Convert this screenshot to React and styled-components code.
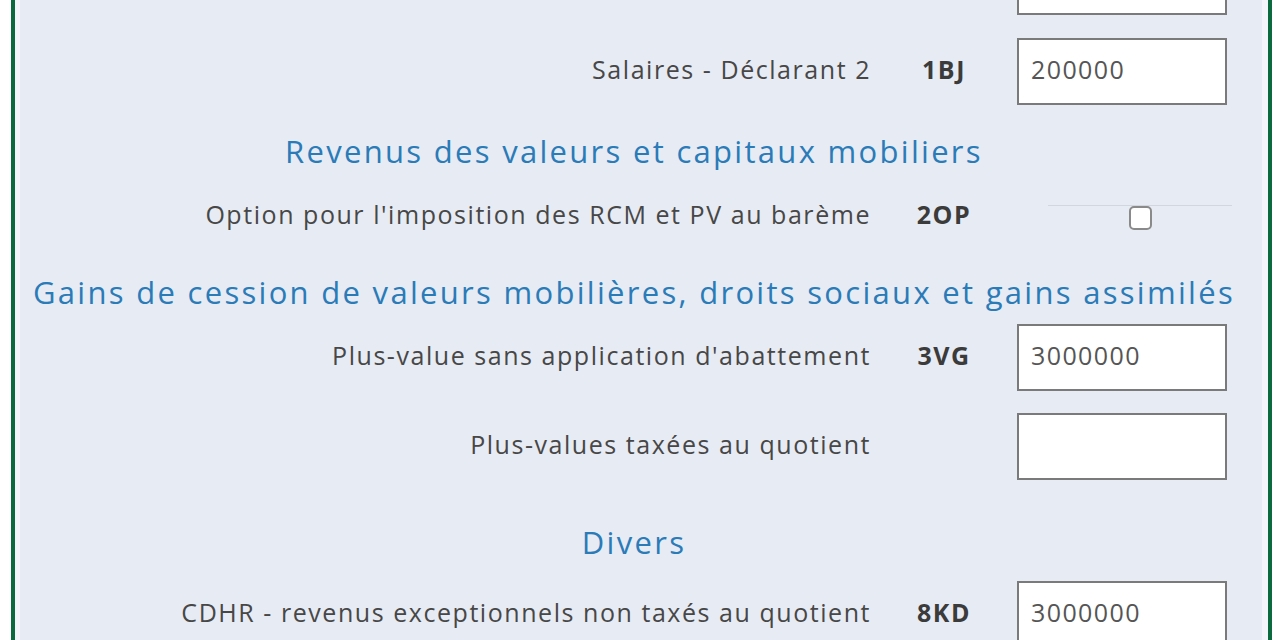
import React from "react";
import styled, { createGlobalStyle } from "styled-components";

const Global = createGlobalStyle`
  html, body { margin: 0; padding: 0; background: #ffffff; }
  body { font-family: "Open Sans", "DejaVu Sans", sans-serif; overflow: hidden; }
`;

const Frame = styled.div`
  margin-left: 11px;
  width: 1261px;
  box-sizing: border-box;
  height: 640px;
  overflow: hidden;
  border-left: 4px solid #0c6b3e;
  border-right: 4px solid #0c6b3e;
  padding: 0 6px 0 5px;
  background: #f3f5fa;
`;

const Panel = styled.div`
  background: #e7ebf3;
  display: flex;
  flex-direction: column;
  min-height: 800px;
`;

const Row = styled.div`
  display: grid;
  grid-template-columns: 1fr 146px 210px;
  align-items: center;
  padding-right: 35px;
  height: ${(p) => p.$h || 67}px;
  margin-top: ${(p) => p.$mt || 0}px;
`;

const Label = styled.div`
  text-align: right;
  font-size: 25px;
  letter-spacing: 1.55px;
  color: #474747;
  white-space: nowrap;
  padding-bottom: 5px;
`;

const Code = styled.div`
  text-align: center;
  font-size: 25px;
  letter-spacing: 1.5px;
  font-weight: 700;
  color: #3b3b3b;
  padding-bottom: 5px;
`;

const Input = styled.div`
  box-sizing: border-box;
  height: 67px;
  background: #ffffff;
  border: 2px solid #7a7a7a;
  padding: 0 0 5px 12px;
  display: flex;
  align-items: center;
  font-size: 25px;
  letter-spacing: 1.4px;
  color: #555555;
`;

const Heading = styled.h2`
  margin: ${(p) => p.$mt || 0}px 0 0 0;
  padding-right: 14px;
  height: 40px;
  line-height: 38px;
  text-align: center;
  font-size: 31px;
  letter-spacing: 2.3px;
  font-weight: 400;
  color: #2a7bb8;
  white-space: nowrap;
`;

const ToggleCell = styled.div`
  align-self: start;
  margin: 9px -5px 0 31px;
  border-top: 1px solid #d2d7df;
  display: flex;
  justify-content: center;
`;

const Check = styled.span`
  box-sizing: border-box;
  width: 23px;
  height: 24px;
  background: #ffffff;
  border: 2px solid #8a8a8a;
  border-radius: 5px;
`;

export default function App() {
  return (
    <>
      <Global />
      <Frame>
        <Panel>
          <Row $mt={-52}>
            <Label />
            <Code />
            <Input />
          </Row>
          <Row $mt={23}>
            <Label>Salaires - Déclarant 2</Label>
            <Code>1BJ</Code>
            <Input>200000</Input>
          </Row>
          <Heading $mt={27}>Revenus des valeurs et capitaux mobiliers</Heading>
          <Row $mt={24} $h={40}>
            <Label>Option pour l'imposition des RCM et PV au barème</Label>
            <Code>2OP</Code>
            <ToggleCell>
              <Check />
            </ToggleCell>
          </Row>
          <Heading $mt={37}>
            Gains de cession de valeurs mobilières, droits sociaux et gains assimilés
          </Heading>
          <Row $mt={10} $h={68}>
            <Label>Plus-value sans application d'abattement</Label>
            <Code>3VG</Code>
            <Input>3000000</Input>
          </Row>
          <Row $mt={22}>
            <Label>Plus-values taxées au quotient</Label>
            <Code />
            <Input />
          </Row>
          <Heading $mt={43}>Divers</Heading>
          <Row $mt={18}>
            <Label>CDHR - revenus exceptionnels non taxés au quotient</Label>
            <Code>8KD</Code>
            <Input>3000000</Input>
          </Row>
        </Panel>
      </Frame>
    </>
  );
}
